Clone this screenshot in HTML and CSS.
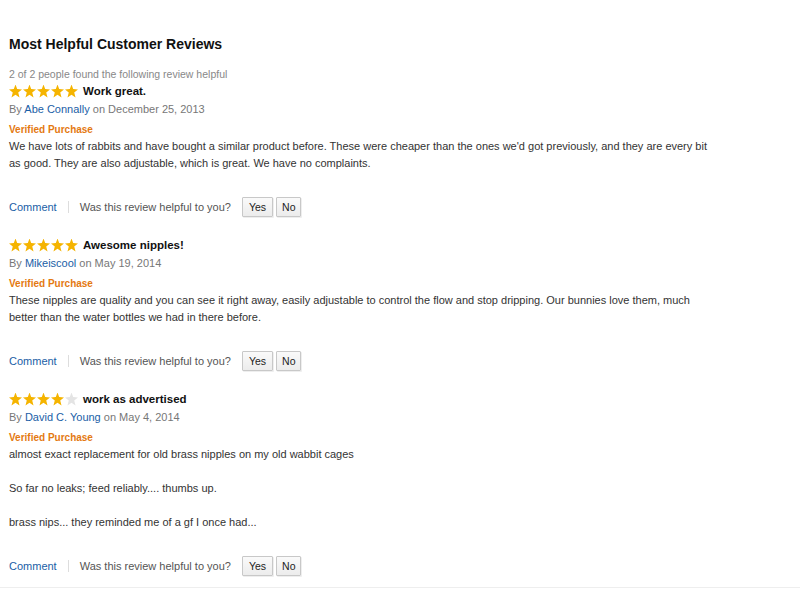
FILE: index.html
```html
<!DOCTYPE html>
<html lang="en">
<head>
<meta charset="utf-8">
<title>Most Helpful Customer Reviews</title>
<link rel="stylesheet" href="styles.css">
</head>
<body>
<div class="reviews">
  <h3 class="heading">Most Helpful Customer Reviews</h3>

  <div class="review">
    <div class="votes">2 of 2 people found the following review helpful</div>
    <div class="head">
      <span class="stars"><i></i><i></i><i></i><i></i><i></i></span>
      <b class="title">Work great.</b>
    </div>
    <div class="by">By <a href="#">Abe Connally</a> on December 25, 2013</div>
    <div class="verified">Verified Purchase</div>
    <div class="text">We have lots of rabbits and have bought a similar product before. These were cheaper than the ones we'd got previously, and they are every bit as good. They are also adjustable, which is great. We have no complaints.</div>
    <div class="foot">
      <a href="#">Comment</a><span class="sep"></span>
      <span>Was this review helpful to you?</span>
      <button>Yes</button><button>No</button>
    </div>
  </div>

  <div class="review">
    <div class="head">
      <span class="stars"><i></i><i></i><i></i><i></i><i></i></span>
      <b class="title">Awesome nipples!</b>
    </div>
    <div class="by">By <a href="#">Mikeiscool</a> on May 19, 2014</div>
    <div class="verified">Verified Purchase</div>
    <div class="text">These nipples are quality and you can see it right away, easily adjustable to control the flow and stop dripping. Our bunnies love them, much better than the water bottles we had in there before.</div>
    <div class="foot">
      <a href="#">Comment</a><span class="sep"></span>
      <span>Was this review helpful to you?</span>
      <button>Yes</button><button>No</button>
    </div>
  </div>

  <div class="review">
    <div class="head">
      <span class="stars"><i></i><i></i><i></i><i></i><i class="off"></i></span>
      <b class="title">work as advertised</b>
    </div>
    <div class="by">By <a href="#">David C. Young</a> on May 4, 2014</div>
    <div class="verified">Verified Purchase</div>
    <div class="text">almost exact replacement for old brass nipples on my old wabbit cages<br><br>So far no leaks; feed reliably.... thumbs up.<br><br>brass nips... they reminded me of a gf I once had...</div>
    <div class="foot">
      <a href="#">Comment</a><span class="sep"></span>
      <span>Was this review helpful to you?</span>
      <button>Yes</button><button>No</button>
    </div>
  </div>
</div>
</body>
</html>
```

FILE: styles.css
```css
*{box-sizing:border-box;}
html,body{margin:0;background:#fff;}
body{ color:#333; font-family:Arial,"Liberation Sans",sans-serif; font-size:11px; line-height:17px; }
.reviews{ padding:35px 0 0 9px; border-bottom:1px solid #eee; }
.heading{ font-size:14px; line-height:18px; font-weight:bold; color:#111; margin:0 0 14px; }

/* one review block: stars + title, byline, badge, body, helpful row */
.review{ width:712px; margin-bottom:19px; }
.review:last-child{ margin-bottom:11px; }
.votes{ font-size:10.5px; line-height:14px; color:#888; margin-bottom:1px; }
.head{ display:flex; align-items:center; height:18px; margin-bottom:1px; }
.stars{ display:flex; gap:1px; margin-right:5px; }
.stars i{ width:13px; height:13px; background:#f5b400; clip-path:polygon(50% 0,63% 35%,100% 38%,71% 61%,81% 100%,50% 78%,19% 100%,29% 61%,0 38%,37% 35%); }
.stars i.off{ background:#e4e4e4; }
.title{ font-size:11.5px; color:#111; }
.by{ color:#777; margin-bottom:4px; }
.by a{ color:#1a5ea6; text-decoration:none; }
.verified{ font-size:10px; line-height:16px; font-weight:bold; color:#e47911; }
.text{ color:#333; }

.foot{ display:flex; align-items:center; margin-top:25px; color:#555; }
.foot a{ color:#1a5ea6; text-decoration:none; }
.sep{ width:1px; height:12px; background:#ddd; margin:0 11px; }
.foot button{ font:inherit; font-size:10.5px; line-height:14px; color:#222; background:linear-gradient(#fafafa,#ececec); border:1px solid #c8c8c8; border-radius:1px; box-shadow:1px 1px 0 #eee; padding:2px 5px; min-width:24px; margin-left:3px; height:20px; }
.foot button:first-of-type{ margin-left:11px; padding:2px 6px; }
```
